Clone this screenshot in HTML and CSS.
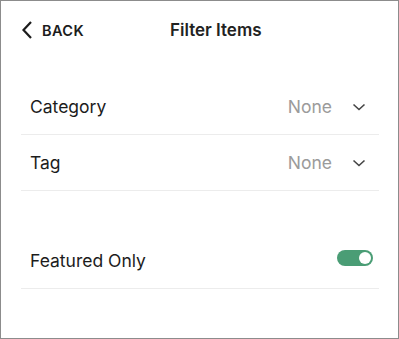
FILE: index.html
```html
<!DOCTYPE html>
<html lang="en">

<head>
    <title>Filter Items</title>
    <link rel="stylesheet" href="styles.css">
</head>

<body>
    <div class="panel">
        <div class="header">
            <button type="button" class="back">
                <svg width="12" height="18" viewBox="0 0 12 18">
                    <path d="M10 1 L2.5 9 L10 17" fill="none" stroke="#1c1c1c" stroke-width="2.2" />
                </svg>
                <span>BACK</span>
            </button>
            <h2 class="title">Filter Items</h2>
        </div>

        <div class="list">
            <div class="row">
                <span class="label">Category</span>
                <span class="value">None</span>
                <svg class="caret" width="14" height="8" viewBox="0 0 14 8">
                    <path d="M1.5 1.5 L7 6.5 L12.5 1.5" fill="none" stroke="#444" stroke-width="1.6" />
                </svg>
            </div>
            <div class="row">
                <span class="label">Tag</span>
                <span class="value">None</span>
                <svg class="caret" width="14" height="8" viewBox="0 0 14 8">
                    <path d="M1.5 1.5 L7 6.5 L12.5 1.5" fill="none" stroke="#444" stroke-width="1.6" />
                </svg>
            </div>
        </div>

        <div class="list featured">
            <div class="row toggle-row">
                <span class="label">Featured Only</span>
                <span class="toggle on"><span class="knob"></span></span>
            </div>
        </div>
    </div>
</body>

</html>
```

FILE: styles.css
```css
* {
    box-sizing: border-box;
}

body {
    margin: 0;
    background-color: #fff;
    font-family: Inter, "Liberation Sans", sans-serif;
    color: #1c1c1c;
}

.panel {
    height: 339px;
    border: 1px solid #8c8c8c;
    padding: 0 19px 0 20px;
}

.header {
    height: 58px;
    display: flex;
    align-items: center;
}

.back {
    display: flex;
    align-items: center;
    gap: 9px;
    background: none;
    border: none;
    padding: 0;
    font-family: inherit;
    font-size: 14.5px;
    font-weight: 600;
    letter-spacing: 0.4px;
    color: #1c1c1c;
}

.title {
    margin: 0 0 0 86px;
    font-size: 17px;
    font-weight: 600;
    color: #222;
}

.list {
    margin-top: 20px;
}

.featured {
    margin-top: 42px;
}

.row {
    height: 56px;
    display: flex;
    align-items: center;
    padding: 0 13px 0 9px;
    border-bottom: 1px solid #ececec;
}

.label {
    flex: 1;
    font-size: 17.5px;
}

.value {
    font-size: 17.5px;
    color: #9b9b9b;
}

.caret {
    margin-left: 20px;
}

.toggle-row {
    padding-right: 6px;
}

.toggle {
    width: 36px;
    height: 16px;
    margin-bottom: 5px;
    border-radius: 8px;
    background-color: #4a9d75;
    display: flex;
    align-items: center;
    justify-content: flex-end;
    padding: 0 2px;
}

.knob {
    width: 12px;
    height: 12px;
    border-radius: 50%;
    background-color: #fff;
}
```
